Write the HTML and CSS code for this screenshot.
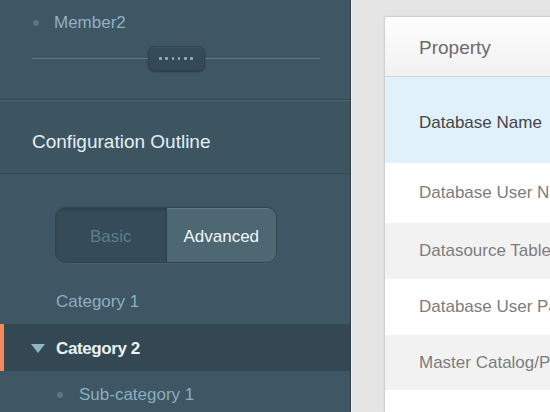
FILE: index.html
```html
<!DOCTYPE html>
<html>
<head>
<meta charset="utf-8">
<link rel="stylesheet" href="styles.css">
</head>
<body>
<div class="app">
  <aside class="sidebar">
    <section class="members">
      <div class="member"><span class="dot"></span><span class="member-name">Member2</span></div>
      <div class="splitter">
        <span class="rule"></span>
        <span class="handle"><i></i><i></i><i></i><i></i><i></i><i></i></span>
        <span class="rule"></span>
      </div>
    </section>
    <header class="outline-head">Configuration Outline</header>
    <section class="outline">
      <div class="toggle">
        <span class="seg seg-off">Basic</span>
        <span class="seg seg-on">Advanced</span>
      </div>
      <div class="cat">Category 1</div>
      <div class="cat cat-active"><span class="tri"></span>Category 2</div>
      <div class="sub"><span class="dot"></span>Sub-category 1</div>
    </section>
  </aside>
  <main class="main">
    <div class="card">
      <div class="thead">Property</div>
      <div class="row row-sel">Database Name</div>
      <div class="row row-a">Database User Name</div>
      <div class="row row-b">Datasource Table Name</div>
      <div class="row row-c">Database User Password</div>
      <div class="row row-d">Master Catalog/Path</div>
    </div>
  </main>
</div>
</body>
</html>
```
FILE: styles.css
```css
html, body {
  margin: 0;
  padding: 0;
  width: 550px;
  height: 412px;
  overflow: hidden;
  font-family: "Liberation Sans", Arial, sans-serif;
}
.app {
  display: flex;
  width: 550px;
  height: 412px;
}
.sidebar {
  width: 350px;
  flex: none;
  background: #3f5664;
  border-right: 1px solid #2c3c45;
  display: flex;
  flex-direction: column;
}
.members {
  height: 100px;
  flex: none;
  box-sizing: border-box;
  padding: 11px 30px 0 33px;
  border-bottom: 1px solid #34484f;
}
.member {
  display: flex;
  align-items: center;
  height: 24px;
}
.dot {
  width: 6px;
  height: 6px;
  border-radius: 50%;
  background: #5a7684;
  flex: none;
}
.member-name {
  margin-left: 15px;
  font-size: 17px;
  color: #8db2c3;
}
.splitter {
  display: flex;
  align-items: center;
  margin-top: 11px;
  margin-left: -1px;
}
.rule {
  flex: 1;
  height: 1px;
  background: #5d7a88;
}
.handle {
  width: 57px;
  height: 25px;
  box-sizing: border-box;
  border-radius: 7px;
  background: #344a56;
  border: 1px solid #2f434e;
  box-shadow: 0 1px 2px rgba(0,0,0,0.35), inset 0 1px 0 rgba(255,255,255,0.06);
  display: flex;
  align-items: center;
  justify-content: center;
  gap: 3.6px;
}
.handle i {
  width: 2.6px;
  height: 2.6px;
  background: #8fb0c0;
  border-radius: 1px;
}
.outline-head {
  height: 74px;
  flex: none;
  box-sizing: border-box;
  border-top: 1px solid #4e6774;
  border-bottom: 1px solid #354a55;
  background: #3d5461;
  padding-left: 32px;
  padding-top: 9px;
  display: flex;
  align-items: center;
  font-size: 19px;
  color: #e2eff5;
}
.outline {
  flex: 1;
  padding-top: 33px;
}
.toggle {
  margin-left: 55px;
  width: 222px;
  height: 56px;
  box-sizing: border-box;
  display: flex;
  border-radius: 10px;
  border: 1px solid #30444f;
  overflow: hidden;
  box-shadow: 0 1px 0 rgba(255,255,255,0.06);
}
.seg {
  flex: 1;
  display: flex;
  align-items: center;
  justify-content: center;
  padding-top: 4px;
  font-size: 17px;
}
.seg-off {
  background: #354b57;
  color: #5e7e8c;
  border-right: 1px solid #2d3f49;
  box-shadow: inset 0 2px 3px rgba(0,0,0,0.15);
}
.seg-on {
  background: #4d6773;
  color: #f2f7f9;
  box-shadow: inset 0 1px 0 rgba(255,255,255,0.12);
}
.cat {
  height: 48px;
  box-sizing: border-box;
  display: flex;
  align-items: center;
  padding-left: 56px;
  padding-top: 2px;
  font-size: 17px;
  color: #8ab0c1;
  margin-top: 14px;
  margin-bottom: -13px;
}
.cat-active {
  position: relative;
  margin-top: 12px;
  margin-bottom: 0;
  height: 47px;
  background: #334852;
  color: #eaf2f5;
  font-weight: bold;
  letter-spacing: -0.4px;
  border-left: 4px solid #f5895a;
  padding-left: 52px;
}
.tri {
  position: absolute;
  left: 27px;
  top: 20px;
  width: 0;
  height: 0;
  border-left: 7px solid transparent;
  border-right: 7px solid transparent;
  border-top: 9px solid #8fb4c4;
}
.sub {
  height: 44px;
  box-sizing: border-box;
  display: flex;
  align-items: center;
  padding-left: 57px;
  padding-top: 4px;
  font-size: 17px;
  color: #8aaebf;
}
.sub .dot {
  margin-right: 16px;
}
.main {
  flex: 1;
  display: flex;
  flex-direction: column;
  background: #e4e4e4;
  border-left: 1px solid #f2f2f2;
  padding: 16px 0 0 32px;
  overflow: hidden;
}
.card {
  flex: 1;
  width: 240px;
  background: #fff;
  border: 1px solid #d0d0d0;
  border-right: none;
  border-bottom: none;
  border-radius: 3px 0 0 0;
  box-shadow: 0 0 2px rgba(0,0,0,0.08);
  overflow: hidden;
}
.thead {
  height: 60px;
  box-sizing: border-box;
  background: linear-gradient(#fefefe, #f1f1f1);
  border-bottom: 1px solid #d6d6d6;
  padding-left: 34px;
  padding-top: 2px;
  display: flex;
  align-items: center;
  font-size: 19px;
  color: #6b6b6b;
  white-space: nowrap;
}
.row {
  display: flex;
  align-items: center;
  padding-left: 34px;
  font-size: 17px;
  color: #7c7c7c;
  white-space: nowrap;
  box-sizing: border-box;
}
.row-sel {
  height: 86px;
  padding-top: 6px;
  background: #e0f1fb;
  color: #454545;
}
.row-a { height: 60px; background: #fff; }
.row-b { height: 56px; background: #f2f2f2; }
.row-c { height: 56px; background: #fff; }
.row-d { height: 55px; background: #f2f2f2; }
```
